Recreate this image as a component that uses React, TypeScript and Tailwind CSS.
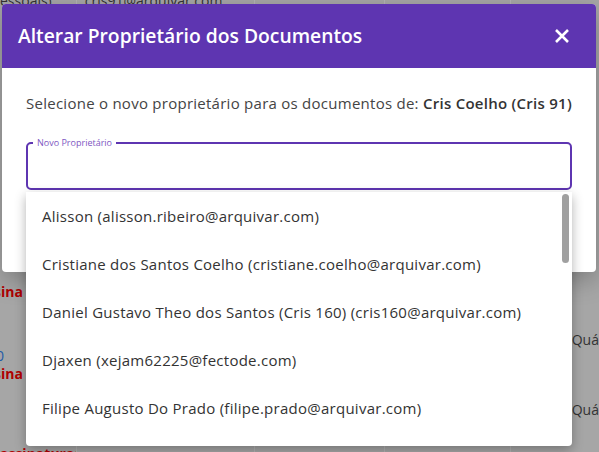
import React from "react";

const items = [
  "Alisson (alisson.ribeiro@arquivar.com)",
  "Cristiane dos Santos Coelho (cristiane.coelho@arquivar.com)",
  "Daniel Gustavo Theo dos Santos (Cris 160) (cris160@arquivar.com)",
  "Djaxen (xejam62225@fectode.com)",
  "Filipe Augusto Do Prado (filipe.prado@arquivar.com)",
  "Gabriel Souza (gabriel.souza@arquivar.com)",
];

const font = { fontFamily: "'Open Sans', Lato, sans-serif" };

export default function App() {
  return (
    <div className="relative w-[599px] h-[452px] overflow-hidden bg-[#a6a6a6]" style={font}>
      {/* background table (dimmed) */}
      <div className="absolute inset-0 flex">
        <div className="w-[77px] overflow-hidden border-r border-[#b3b3b3] flex flex-col text-[14px] font-bold text-[#b00000]">
          <div className="h-[6px] -mt-[10px] text-[#333] font-normal">essoais)</div>
          <div className="mt-[286px] leading-[20px] -ml-[6px]">sina</div>
          <div className="mt-[46px] leading-[16px] text-[#1e5aa8] font-normal -ml-[4px]">0</div>
          <div className="leading-[20px] -ml-[6px]">sina</div>
          <div className="mt-[60px] leading-[20px]">assinaturas</div>
        </div>
        <div className="w-[179px] overflow-hidden border-r border-[#b3b3b3] pl-[8px] text-[14px] text-[#333]">
          <div className="-mt-[10px]">cris91@arquivar.com</div>
        </div>
        <div className="w-[130px] border-r border-[#b3b3b3]" />
        <div className="w-[126px] border-r border-[#b3b3b3]" />
        <div className="flex-1 flex flex-col text-[14px] text-[#333] pl-[61px]">
          <div className="mt-[330px] leading-[20px]">Quá</div>
          <div className="mt-[50px] leading-[20px]">Quá</div>
        </div>
      </div>

      {/* modal */}
      <div className="absolute left-[2px] top-[4px] w-[594px] h-[268px] bg-white rounded-[4px] shadow-[0_8px_24px_rgba(0,0,0,0.25)] overflow-hidden">
        <div className="h-[64px] bg-[#5e35b1] flex items-center justify-between pl-[16px] pr-[26px]">
          <div className="text-white text-[19.3px] font-semibold">
            Alterar Proprietário dos Documentos
          </div>
          <svg width="16" height="16" viewBox="0 0 16 16" className="text-white">
            <path d="M2 2 L14 14 M14 2 L2 14" stroke="currentColor" strokeWidth="2.6" strokeLinecap="butt" />
          </svg>
        </div>
        <div className="px-[24px] pt-[24px]">
          <div className="text-[15px] tracking-[0.26px] text-[#444] leading-[22px] whitespace-nowrap">
            Selecione o novo proprietário para os documentos de:{" "}
            <span className="font-semibold text-[#333]">Cris Coelho (Cris 91)</span>
          </div>
          <div className="relative mt-[28px] h-[48px] w-[546px] rounded-[5px] border-2 border-[#5e35b1]">
            <div className="absolute -top-[6px] left-[5px] bg-white px-[4px] text-[9px] leading-[10px] text-[#7e57c2]">
              Novo Proprietário
            </div>
          </div>
        </div>
      </div>

      {/* dropdown */}
      <div className="absolute left-[26px] top-[192px] w-[546px] h-[254px] bg-white rounded-b-[4px] shadow-[0_4px_12px_rgba(0,0,0,0.3)] overflow-hidden">
        <div className="flex flex-col">
          {items.map((t) => (
            <div key={t} className="h-[48px] flex items-center pl-[16px] text-[15px] tracking-[0.26px] text-[#333] whitespace-nowrap">
              {t}
            </div>
          ))}
        </div>
        <div className="absolute right-[3px] top-[2px] w-[7px] h-[69px] rounded-full bg-[#a0a0a0]" />
      </div>
    </div>
  );
}
